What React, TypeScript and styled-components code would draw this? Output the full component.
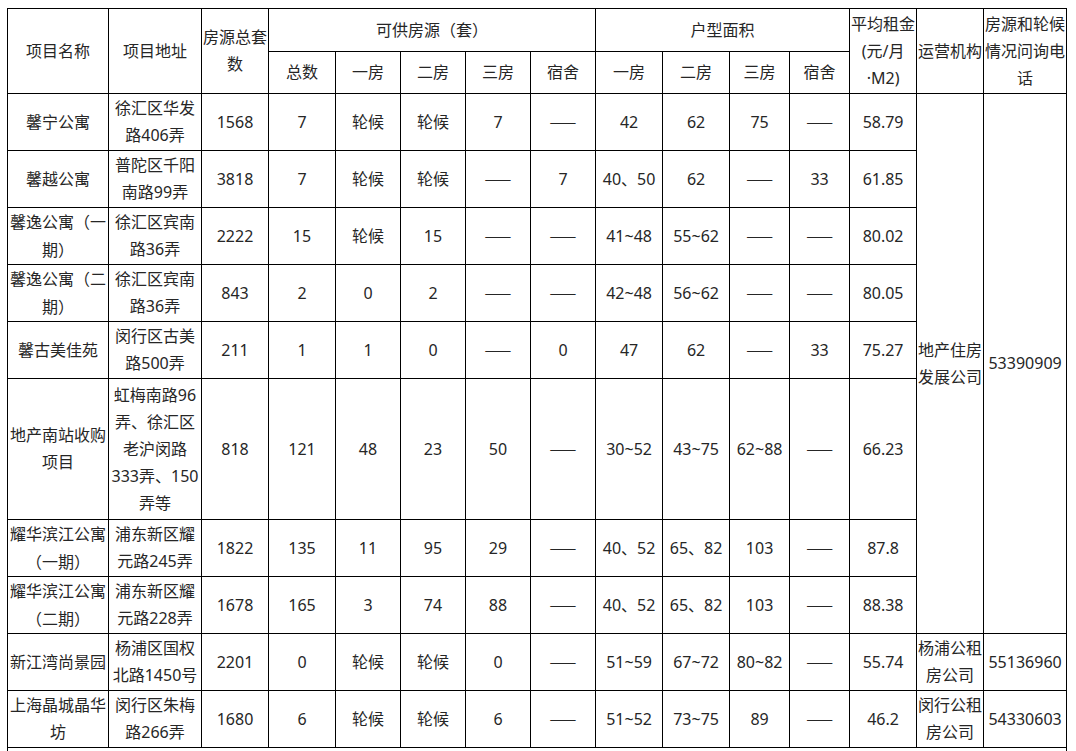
import React from 'react'
import styled, { createGlobalStyle } from 'styled-components'

const GlobalStyle = createGlobalStyle`
  html, body {
    margin: 0;
    padding: 0;
    background: #ffffff;
  }
`

const Page = styled.div`
  padding: 8px 0 0 7px;
  font-family: 'Noto Sans', 'Noto Sans CJK SC', sans-serif;
  color: #262626;
`

const Table = styled.table`
  border-collapse: collapse;
  table-layout: fixed;
  width: 1060px;
`

const TableRow = styled.tr<{ $h: number }>`
  height: ${(p) => p.$h}px;
`

// full-width brackets sit centred in their em box in the reference
const Paren = styled.span`
  font-family: 'Noto Sans CJK KR', 'Noto Sans CJK SC', sans-serif;
`

// em dashes from the CJK face join up into one rule
const Dash = styled.span`
  font-family: 'Noto Sans CJK SC', sans-serif;
`

const Cell = styled.td`
  border: 1px solid #000;
  padding: 0 1px;
  text-align: center;
  vertical-align: middle;
  font-size: 16px;
  line-height: 27px;
  font-weight: 400;
  white-space: nowrap;
  overflow: hidden;
`

const Open = () => <Paren>（</Paren>
const Close = () => <Paren>）</Paren>

type Row = {
  name: React.ReactNode
  address: React.ReactNode
  total: string
  avail: string[]
  area: string[]
  rent: string
  height?: number
}

const D = '——'

const rows: Row[] = [
  {
    name: '馨宁公寓',
    address: <>徐汇区华发<br />路406弄</>,
    total: '1568',
    avail: ['7', '轮候', '轮候', '7', D],
    area: ['42', '62', '75', D],
    rent: '58.79'
  },
  {
    name: '馨越公寓',
    address: <>普陀区千阳<br />南路99弄</>,
    total: '3818',
    avail: ['7', '轮候', '轮候', D, '7'],
    area: ['40、50', '62', D, '33'],
    rent: '61.85'
  },
  {
    name: <>馨逸公寓<Open />一<br />期<Close /></>,
    address: <>徐汇区宾南<br />路36弄</>,
    total: '2222',
    avail: ['15', '轮候', '15', D, D],
    area: ['41~48', '55~62', D, D],
    rent: '80.02'
  },
  {
    name: <>馨逸公寓<Open />二<br />期<Close /></>,
    address: <>徐汇区宾南<br />路36弄</>,
    total: '843',
    avail: ['2', '0', '2', D, D],
    area: ['42~48', '56~62', D, D],
    rent: '80.05'
  },
  {
    name: '馨古美佳苑',
    address: <>闵行区古美<br />路500弄</>,
    total: '211',
    avail: ['1', '1', '0', D, '0'],
    area: ['47', '62', D, '33'],
    rent: '75.27'
  },
  {
    name: <>地产南站收购<br />项目</>,
    address: <>虹梅南路96<br />弄、徐汇区<br />老沪闵路<br />333弄、150<br />弄等</>,
    total: '818',
    avail: ['121', '48', '23', '50', D],
    area: ['30~52', '43~75', '62~88', D],
    rent: '66.23',
    height: 141
  },
  {
    name: <>耀华滨江公寓<br /><Open />一期<Close /></>,
    address: <>浦东新区耀<br />元路245弄</>,
    total: '1822',
    avail: ['135', '11', '95', '29', D],
    area: ['40、52', '65、82', '103', D],
    rent: '87.8'
  },
  {
    name: <>耀华滨江公寓<br /><Open />二期<Close /></>,
    address: <>浦东新区耀<br />元路228弄</>,
    total: '1678',
    avail: ['165', '3', '74', '88', D],
    area: ['40、52', '65、82', '103', D],
    rent: '88.38'
  },
  {
    name: '新江湾尚景园',
    address: <>杨浦区国权<br />北路1450号</>,
    total: '2201',
    avail: ['0', '轮候', '轮候', '0', D],
    area: ['51~59', '67~72', '80~82', D],
    rent: '55.74'
  },
  {
    name: <>上海晶城晶华<br />坊</>,
    address: <>闵行区朱梅<br />路266弄</>,
    total: '1680',
    avail: ['6', '轮候', '轮候', '6', D],
    area: ['51~52', '73~75', '89', D],
    rent: '46.2'
  }
]

const colWidths = [101, 93, 67, 67, 65, 65, 65, 65, 67, 67, 60, 60, 67, 67, 83]

const Value = ({ v }: { v: string }) => (v === D ? <Dash>{v}</Dash> : <>{v}</>)

const App = () => {
  return (
    <Page>
      <GlobalStyle />
      <Table>
        <colgroup>
          {colWidths.map((w, i) => (
            <col key={i} style={{ width: w }} />
          ))}
        </colgroup>
        <thead>
          <TableRow $h={43}>
            <Cell rowSpan={2}>项目名称</Cell>
            <Cell rowSpan={2}>项目地址</Cell>
            <Cell rowSpan={2}>房源总套<br />数</Cell>
            <Cell colSpan={5}>可供房源<Open />套<Close /></Cell>
            <Cell colSpan={4}>户型面积</Cell>
            <Cell rowSpan={2}>平均租金<br />(元/月<br />·M2)</Cell>
            <Cell rowSpan={2}>运营机构</Cell>
            <Cell rowSpan={2}>房源和轮候<br />情况问询电<br />话</Cell>
          </TableRow>
          <TableRow $h={42}>
            <Cell>总数</Cell>
            <Cell>一房</Cell>
            <Cell>二房</Cell>
            <Cell>三房</Cell>
            <Cell>宿舍</Cell>
            <Cell>一房</Cell>
            <Cell>二房</Cell>
            <Cell>三房</Cell>
            <Cell>宿舍</Cell>
          </TableRow>
        </thead>
        <tbody>
          {rows.map((r, i) => (
            <TableRow key={i} $h={r.height ?? 57}>
              <Cell>{r.name}</Cell>
              <Cell>{r.address}</Cell>
              <Cell>{r.total}</Cell>
              {r.avail.map((v, j) => (
                <Cell key={`a${j}`}><Value v={v} /></Cell>
              ))}
              {r.area.map((v, j) => (
                <Cell key={`b${j}`}><Value v={v} /></Cell>
              ))}
              <Cell>{r.rent}</Cell>
              {i === 0 && (
                <>
                  <Cell rowSpan={8}>地产住房<br />发展公司</Cell>
                  <Cell rowSpan={8}>53390909</Cell>
                </>
              )}
              {i === 8 && (
                <>
                  <Cell>杨浦公租<br />房公司</Cell>
                  <Cell>55136960</Cell>
                </>
              )}
              {i === 9 && (
                <>
                  <Cell>闵行公租<br />房公司</Cell>
                  <Cell>54330603</Cell>
                </>
              )}
            </TableRow>
          ))}
          <TableRow $h={40}>
            <Cell colSpan={15} />
          </TableRow>
        </tbody>
      </Table>
    </Page>
  )
}

export default App
